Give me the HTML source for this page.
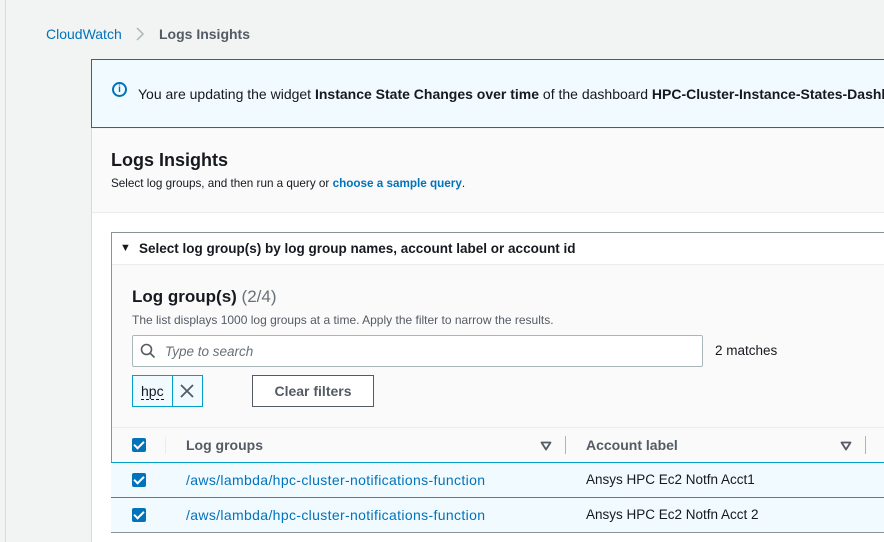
<!DOCTYPE html>
<html><head><style>
body{margin:0;width:884px;height:542px;overflow:hidden;background:#f2f3f3;font-family:"Liberation Sans",sans-serif;position:relative;color:#16191f}
.a{position:absolute}
.ck{position:absolute;width:14px;height:14px;background:#0073bb;border-radius:2px}
.ck:after{content:"";position:absolute;left:4px;top:1px;width:4px;height:8px;border:solid #fff;border-width:0 2px 2px 0;transform:rotate(45deg)}
.row{position:absolute;left:111px;width:773px;height:34px;background:#f1faff;border-top:1px solid #00a1c9;border-bottom:1px solid #00a1c9}
.link{color:#0073bb}
</style></head><body>
<div class="a" style="left:5px;top:0;width:1px;height:542px;background:#d5dbdb"></div>
<div class="a" style="left:46px;top:26px;font-size:14px;color:#0073bb">CloudWatch</div>
<svg class="a" style="left:135px;top:27px" width="10" height="14"><path d="M2 1 L8 7 L2 13" fill="none" stroke="#aab7b8" stroke-width="1.5"/></svg>
<div class="a" style="left:159px;top:26px;font-size:14px;font-weight:bold;color:#545b64">Logs Insights</div>
<div class="a" style="left:91px;top:59px;width:793px;height:69px;background:#f1faff;border:1px solid #0073bb;border-right:none;box-sizing:border-box;overflow:hidden">
<div class="a" style="left:20px;top:22px;width:15px;height:15px;border:2px solid #0073bb;border-radius:50%;box-sizing:border-box;font-size:10px;font-weight:bold;color:#0073bb;text-align:center;line-height:11px">i</div>
<div class="a" style="left:46px;top:26px;font-size:14px;white-space:nowrap">You are updating the widget <b>Instance State Changes over time</b> of the dashboard <b>HPC-Cluster-Instance-States-Dashboard</b></div>
</div>
<div class="a" style="left:91px;top:129px;width:793px;height:83px;background:#fafafa;border-bottom:1px solid #eaeded"></div>
<div class="a" style="left:91px;top:128px;width:1px;height:414px;background:#d5dbdb"></div>
<div class="a" style="left:92px;top:213px;width:792px;height:329px;background:#fff"></div>
<div class="a" style="left:111px;top:150px;font-size:18px;font-weight:bold">Logs Insights</div>
<div class="a" style="left:111px;top:177px;font-size:11.7px">Select log groups, and then run a query or <b class="link">choose a sample query</b>.</div>
<div class="a" style="left:111px;top:232px;width:773px;height:300px;border:1px solid #879596;border-right:none;background:#fafafa;box-sizing:border-box"></div>
<div class="a" style="left:112px;top:233px;width:772px;height:31px;background:#fff;border-bottom:1px solid #eaeded"></div>
<div class="a" style="left:120px;top:242px;font-size:11px">&#9660;</div>
<div class="a" style="left:139px;top:241px;font-size:13.5px;font-weight:bold">Select log group(s) by log group names, account label or account id</div>
<div class="a" style="left:132px;top:287px;font-size:17px;font-weight:bold">Log group(s) <span style="font-weight:normal;color:#687078">(2/4)</span></div>
<div class="a" style="left:132px;top:313px;font-size:12px;color:#545b64">The list displays 1000 log groups at a time. Apply the filter to narrow the results.</div>
<div class="a" style="left:132px;top:335px;width:571px;height:32px;border:1px solid #aab7b8;background:#fff;box-sizing:border-box;border-radius:2px"></div>
<svg class="a" style="left:140px;top:343px" width="16" height="16"><circle cx="6.5" cy="6.5" r="5" fill="none" stroke="#545b64" stroke-width="1.6"/><line x1="10" y1="10" x2="14.5" y2="14.5" stroke="#545b64" stroke-width="1.6"/></svg>
<div class="a" style="left:165px;top:344px;font-size:13.5px;font-style:italic;color:#687078">Type to search</div>
<div class="a" style="left:715px;top:343px;font-size:13.5px">2 matches</div>
<div class="a" style="left:132px;top:375px;width:71px;height:32px;border:1px solid #00a1c9;background:#f1faff;box-sizing:border-box"></div>
<div class="a" style="left:172px;top:376px;width:1px;height:30px;background:#00a1c9"></div>
<div class="a" style="left:141px;top:383px;font-size:14px;border-bottom:1px dashed #16191f;line-height:16px">hpc</div>
<svg class="a" style="left:180px;top:384px" width="14" height="14"><path d="M1 1 L13 13 M13 1 L1 13" stroke="#545b64" stroke-width="1.8"/></svg>
<div class="a" style="left:252px;top:375px;width:122px;height:32px;border:1px solid #545b64;background:#fff;box-sizing:border-box;font-size:14px;font-weight:bold;color:#545b64;text-align:center;line-height:30px">Clear filters</div>
<div class="a" style="left:112px;top:427px;width:772px;height:1px;background:#eaeded"></div>
<div class="ck" style="left:132px;top:438px"></div>
<div class="a" style="left:165px;top:437px;width:1px;height:17px;background:#eaeded"></div>
<div class="a" style="left:186px;top:437px;font-size:14px;font-weight:bold;color:#545b64">Log groups</div>
<svg class="a" style="left:540px;top:441px" width="12" height="10"><path d="M1.5 1.5 H10.5 L6 8.5 Z" fill="none" stroke="#545b64" stroke-width="1.8" stroke-linejoin="round"/></svg>
<div class="a" style="left:565px;top:436px;width:1px;height:18px;background:#aab7b8"></div>
<div class="a" style="left:586px;top:437px;font-size:14px;font-weight:bold;color:#545b64">Account label</div>
<svg class="a" style="left:840px;top:441px" width="12" height="10"><path d="M1.5 1.5 H10.5 L6 8.5 Z" fill="none" stroke="#545b64" stroke-width="1.8" stroke-linejoin="round"/></svg>
<div class="a" style="left:865px;top:436px;width:1px;height:18px;background:#aab7b8"></div>
<div class="row" style="top:462px"></div>
<div class="row" style="top:497px;border-bottom-color:#879596"></div>
<div class="ck" style="left:132px;top:473px"></div>
<div class="ck" style="left:132px;top:508px"></div>
<div class="a link" style="left:186px;top:472px;font-size:14px;letter-spacing:0.35px">/aws/lambda/hpc-cluster-notifications-function</div>
<div class="a link" style="left:186px;top:507px;font-size:14px;letter-spacing:0.35px">/aws/lambda/hpc-cluster-notifications-function</div>
<div class="a" style="left:586px;top:472px;font-size:13.5px">Ansys HPC Ec2 Notfn Acct1</div>
<div class="a" style="left:586px;top:507px;font-size:13.5px">Ansys HPC Ec2 Notfn Acct 2</div>
</body></html>
